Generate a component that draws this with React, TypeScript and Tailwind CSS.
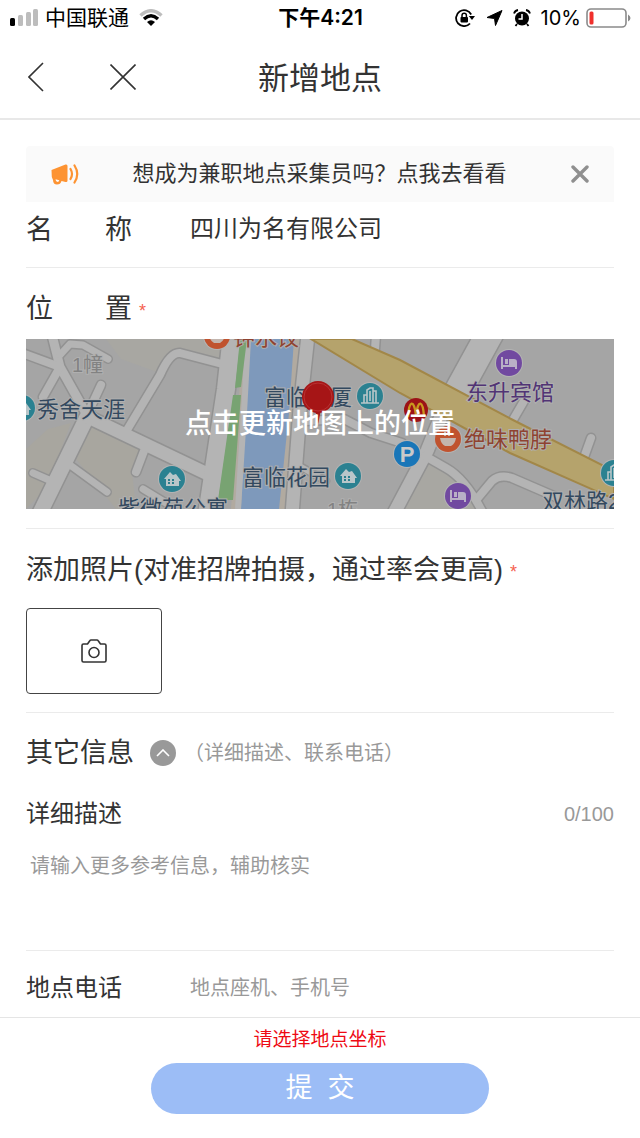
import type { ReactNode } from "react";

const LAND_LABEL = "#33495f";
const HOTEL_LABEL = "#513475";
const FOOD_LABEL = "#8f4330";

const ROADS = [
  { d: "M26 -4 L34 28 L61 76", w: 9 },
  { d: "M-4 14 L34 28 L17 58", w: 8 },
  { d: "M34 16 L44 5 L57 6 L82 20", w: 7 },
  { d: "M75 46 L62 74", w: 8 },
  { d: "M101 91 L134 36 Q144 13 154 14 L200 26", w: 8 },
  { d: "M44 126 L81 153", w: 7 },
  { d: "M7 134 L30 144", w: 7 },
  { d: "M118 112 L110 133", w: 8 },
  { d: "M117 150 L140 164", w: 7 },
  { d: "M62 76 L13 176", w: 15 },
  { d: "M62 78 L190 139", w: 13 },
  { d: "M206 -4 L200 50 L181 176", w: 18 },
  { d: "M280 82 L318 80 L345 94 L376 104", w: 8 },
  { d: "M268 124 L300 142", w: 6 },
  { d: "M282 -4 L274 70 L266 176", w: 13 },
  { d: "M414 80 L401 112 L366 178", w: 13 },
  { d: "M399 117 L420 129 Q440 140 458 176", w: 8 },
  { d: "M451 160 L466 142 Q474 135 486 139 L530 158", w: 8 },
  { d: "M464 -6 L430 56", w: 27 },
  { d: "M350 -4 L349 10", w: 8 },
  { d: "M498 62 L484 86", w: 8 },
  { d: "M565 99 L556 124", w: 8 },
];

function Poi({ x, y, color, children }: { x: number; y: number; color: string; children: ReactNode }) {
  return (
    <g transform={`translate(${x} ${y})`}>
      <circle r="14" fill="#b4b4b4" />
      <circle r="13" fill={color} />
      {children}
    </g>
  );
}

function House() {
  return (
    <g>
      <path d="M-8 0 L-2 -7 L1 -4 L4 -5 L9 2 H7 V7 H-6 V0 Z" fill="#b9c6c9" />
      <path d="M-4 0h2v2h-2z M0 0h2v2h-2z M-4 3h2v2h-2z M0 3h2v2h-2z" fill="#2b7f8d" />
    </g>
  );
}

function Tower() {
  return (
    <g fill="none" stroke="#b9c6c9" strokeWidth="1.6">
      <path d="M-3 7 V-6 L0 -8 H3 V7 M3 -5 H6 V7 M-6 7 V-1 H-3 M-9 7 H9" />
      <path d="M0 -5 V5" />
    </g>
  );
}

function Bed() {
  return (
    <g>
      <path d="M-7 -6 V6 M7 6 V2 M-7 3 H7" stroke="#b9b0c6" strokeWidth="2" />
      <path d="M-4 -4 h3 v5 h-3z M0 -4 H5 Q8 -4 8 -1 V2 H0 Z" fill="#b9b0c6" />
    </g>
  );
}

function Bowl() {
  return (
    <g>
      <path d="M-8 -1 H8 Q7 5 3 7 H-3 Q-7 5 -8 -1 Z" fill="#c3b5ae" />
      <path d="M-3 -7 V-3 M1 -7 V-3" stroke="#c3b5ae" strokeWidth="2" />
    </g>
  );
}

function MapLabel({ x, y, color, size = 22, children }: { x: number; y: number; color: string; size?: number; children: ReactNode }) {
  return (
    <text x={x} y={y} fill={color} fontSize={size} stroke="#b0b0b0" strokeWidth="2" paintOrder="stroke">
      {children}
    </text>
  );
}

function MapPreview() {
  return (
    <svg viewBox="0 0 588 170" preserveAspectRatio="xMidYMid slice" className="block h-full w-full" aria-hidden="true">
      <rect width="588" height="170" fill="#a5a5a5" />
      <path d="M80 0 H200 V22 L154 12 L134 34 L95 20 Z" fill="#a8a7a2" />
      <path d="M68 84 L118 108 L106 132 L110 170 H90 L50 120 Z M0 110 L22 90 L45 84 L20 150 L0 170 Z" fill="#a8a69f" />
      <path d="M400 118 L440 140 L460 170 H370 Z" fill="#a8a7a2" />
      <path d="M217 0 H276 L260 170 H205 Z" fill="#b1aaa0" />
      {ROADS.map((r) => (
        <path key={r.d} d={r.d} fill="none" stroke="#929292" strokeWidth={r.w + 3} strokeLinejoin="round" strokeLinecap="round" />
      ))}
      {ROADS.map((r) => (
        <path key={r.d} d={r.d} fill="none" stroke="#b4b4b4" strokeWidth={r.w} strokeLinejoin="round" strokeLinecap="round" />
      ))}
      <path d="M224 0 H268 L263 74 L253 170 H215 L219 74 Z" fill="#7e99bb" />
      <path d="M222 0 L218 74 L212 170" fill="none" stroke="#b4b4b4" strokeWidth="6" />
      <path d="M214 0 H221 L215 48 L209 49 Z M207 56 H215 L207 161 H192 Z" fill="#78a372" />
      <path d="M285 0 H326 L374 21 L487 81 L588 132 V160 L484 114 L374 54 Z" fill="#b5a36c" stroke="#a28748" strokeWidth="2" />

      <MapLabel x={46} y={33} color="#828282" size={20}>1幢</MapLabel>
      <MapLabel x={301} y={178} color="#828282" size={20}>1栋</MapLabel>
      <MapLabel x={11} y={78} color={LAND_LABEL}>秀舍天涯</MapLabel>
      <MapLabel x={92} y={177} color={LAND_LABEL}>紫微苑公寓</MapLabel>
      <MapLabel x={207} y={6} color={FOOD_LABEL}>钟水饺</MapLabel>
      <MapLabel x={238} y={66} color={LAND_LABEL}>富临大厦</MapLabel>
      <MapLabel x={216} y={146} color={LAND_LABEL}>富临花园</MapLabel>
      <MapLabel x={440} y={61} color={HOTEL_LABEL}>东升宾馆</MapLabel>
      <MapLabel x={438} y={108} color={FOOD_LABEL}>绝味鸭脖</MapLabel>
      <MapLabel x={516} y={170} color={LAND_LABEL}>双林路2</MapLabel>

      <Poi x={-4} y={69} color="#2b8191"><House /></Poi>
      <Poi x={146} y={140} color="#2b8191"><House /></Poi>
      <Poi x={322} y={137} color="#2b8191"><House /></Poi>
      <Poi x={344} y={57} color="#2b8191"><Tower /></Poi>
      <Poi x={588} y={134} color="#2b8191"><Tower /></Poi>
      <Poi x={483} y={24} color="#7149a0"><Bed /></Poi>
      <Poi x={432} y={157} color="#7149a0"><Bed /></Poi>
      <Poi x={191} y={-3} color="#c0532f"><Bowl /></Poi>
      <Poi x={422} y={100} color="#c0532f"><Bowl /></Poi>
      <Poi x={381} y={115} color="#1976b8">
        <text y="8" textAnchor="middle" fontSize="22" fontWeight="700" fill="#c9c9c9">P</text>
      </Poi>
      <g transform="translate(390 71)">
        <circle r="12" fill="#9c1217" />
        <path d="M-8 7 C-7 -10 -2 -11 0 5 C2 -11 7 -10 8 7" fill="none" stroke="#c9971f" strokeWidth="2.4" />
      </g>

      <path d="M289 70 L292 86 L295 70 Z" fill="#a31a1b" />
      <circle cx="292" cy="58" r="16" fill="#a61516" />
      <circle cx="292" cy="58" r="14" fill="none" stroke="#b83233" strokeWidth="1" />
    </svg>
  );
}

function StatusBar() {
  return (
    <div className="grid h-9 grid-cols-[1fr_auto_1fr] items-center pl-[10px] pr-[9px] text-[21px] leading-9 text-black">
      <div className="flex items-center">
        <svg width="29" height="18" viewBox="0 0 29 18" aria-hidden="true">
          <rect x="0" y="9" width="5" height="8" rx="1.5" fill="#000" />
          <rect x="8" y="6" width="5" height="11" rx="1.5" fill="#bdbdbd" />
          <rect x="16" y="3" width="5" height="14" rx="1.5" fill="#bdbdbd" />
          <rect x="23" y="0" width="5" height="17" rx="1.5" fill="#bdbdbd" />
        </svg>
        <span className="ml-[6px]">中国联通</span>
        <svg className="ml-[10px]" width="24" height="18" viewBox="0 0 24 18" fill="none" aria-label="Wi-Fi">
          <path d="M1.5 6.5 Q12 -3 22.5 6.5" stroke="#bdbdbd" strokeWidth="3.4" />
          <path d="M5 10 Q12 3.6 19 10" stroke="#000" strokeWidth="3.4" />
          <path d="M8 13 Q12 9.5 16 13 L12 17 Z" fill="#000" />
        </svg>
      </div>
      <span className="font-semibold">下午4:21</span>
      <div className="flex items-center justify-end">
        <svg width="20" height="18" viewBox="0 0 20 18" fill="none" aria-hidden="true">
          <path d="M16.2 5.5 A8 8 0 1 0 15 14.5" stroke="#000" strokeWidth="1.8" />
          <path d="M13.8 7 H20 L17 11 Z" fill="#000" />
          <rect x="5.5" y="8" width="7.5" height="5.4" rx="0.8" fill="#000" />
          <path d="M7 8 V6.4 a2.2 2.2 0 0 1 4.4 0 V8" stroke="#000" strokeWidth="1.5" />
        </svg>
        <svg className="ml-[11px]" width="17" height="16" viewBox="0 0 17 16" aria-hidden="true">
          <path d="M16 0.5 L9.5 15.5 L8.5 8.5 L1 7.5 Z" fill="#000" stroke="#000" strokeLinejoin="round" />
        </svg>
        <svg className="ml-[10px]" width="18" height="18" viewBox="0 0 18 18" fill="none" aria-hidden="true">
          <circle cx="9" cy="9.5" r="7" fill="#000" />
          <path d="M9 5 V10 H5.5" stroke="#fff" strokeWidth="1.5" />
          <path d="M1 4.5 Q2 1.5 5 1 M17 4.5 Q16 1.5 13 1" stroke="#000" strokeWidth="1.8" />
          <path d="M4 15 L2.5 17 M14 15 L15.5 17" stroke="#000" strokeWidth="1.8" />
        </svg>
        <span className="ml-[10px] font-['Inter',sans-serif] text-[20px]">10%</span>
        <svg className="ml-[5px]" width="45" height="20" viewBox="0 0 45 20" aria-hidden="true">
          <rect x="1" y="1" width="39" height="18" rx="4" fill="#fff" stroke="#8a8a8a" strokeWidth="1.6" />
          <rect x="3.5" y="3.5" width="4" height="13" rx="1.5" fill="#f0302c" />
          <path d="M42 6.5 Q44.5 8 44.5 10 Q44.5 12 42 13.5 Z" fill="#8a8a8a" />
        </svg>
      </div>
    </div>
  );
}

function Required() {
  return <span className="ml-[7px] pt-1 text-[18px] leading-none text-[#f5614f]">*</span>;
}

export default function App() {
  return (
    <div className="flex min-h-screen flex-col bg-white font-['Liberation_Sans','Noto_Sans_CJK_SC',sans-serif] text-[#333]">
      <div className="font-['Inter','Noto_Sans_CJK_SC',sans-serif]">
        <StatusBar />
      </div>

      <header className="grid h-[84px] grid-cols-[1fr_auto_1fr] items-center border-b-2 border-[#e8e8e8] px-7">
        <div className="flex items-center gap-[66px]">
          <button type="button" aria-label="返回">
            <svg width="16" height="30" viewBox="0 0 16 30" fill="none" stroke="#333" strokeWidth="1.6">
              <path d="M15 1 L1 15 L15 29" />
            </svg>
          </button>
          <button type="button" aria-label="关闭">
            <svg width="26" height="26" viewBox="0 0 26 26" fill="none" stroke="#333" strokeWidth="1.6">
              <path d="M0.5 0.5 L25.5 25.5 M25.5 0.5 L0.5 25.5" />
            </svg>
          </button>
        </div>
        <h1 className="pt-1 text-[31px] leading-10">新增地点</h1>
        <span />
      </header>

      <main className="flex-1 px-[26px] pt-[26px]">
        <div className="flex h-14 items-center rounded-t bg-[#fafafa] px-6">
          <svg width="30" height="24" viewBox="0 0 30 24" fill="none" aria-hidden="true">
            <path d="M1.5 8 L15.5 2.5 Q17.5 2 17.5 4 V18.5 Q17.5 20.5 15.5 20 L11.5 19 Q10.5 22.5 7 22.5 Q3.2 22.5 3 18 L1.8 15 Z" fill="#fd9332" />
            <path d="M5.5 17.3 Q5.8 20 7.5 20 Q9 19.8 9.3 18.3 Z" fill="#fafafa" />
            <path d="M20.5 7 Q23.5 12 20.5 17 M24.5 3.5 Q30 12 24.5 20.5" stroke="#fd9332" strokeWidth="2.2" strokeLinecap="round" />
          </svg>
          <a href="#collector" className="flex-1 pr-3 text-center text-[22px] leading-8">想成为兼职地点采集员吗？点我去看看</a>
          <button type="button" aria-label="关闭提示" className="mr-px">
            <svg width="18" height="18" viewBox="0 0 18 18" stroke="#8f8f8f" strokeWidth="3.4" strokeLinecap="round">
              <path d="M2 2 L16 16 M16 2 L2 16" />
            </svg>
          </button>
        </div>

        <div className="flex h-[66px] items-start border-b border-[#ebebeb]">
          <label htmlFor="name" className="flex h-14 w-[106px] items-center justify-between text-[27px]">
            <span>名</span>
            <span>称</span>
          </label>
          <input id="name" defaultValue="四川为名有限公司" className="ml-[58px] h-12 min-w-0 flex-1 bg-transparent text-[24px] outline-none" />
        </div>

        <section className="border-b border-[#ebebeb] pt-5 pb-[19px]">
          <h2 className="flex h-[42px] items-center text-[27px]">
            <span className="flex w-[106px] justify-between">
              <span>位</span>
              <span>置</span>
            </span>
            <Required />
          </h2>
          <button type="button" className="relative mt-[9px] block h-[170px] w-full overflow-hidden">
            <MapPreview />
            <span className="absolute inset-0 flex items-center justify-center text-[27px] font-medium text-white">
              点击更新地图上的位置
            </span>
          </button>
        </section>

        <section className="border-b border-[#ebebeb] pt-5 pb-[18px]">
          <h2 className="flex h-[42px] items-center text-[27px] whitespace-nowrap">
            添加照片(对准招牌拍摄，通过率会更高)
            <Required />
          </h2>
          <button type="button" aria-label="添加照片" className="mt-[17px] flex h-[86px] w-[136px] items-center justify-center rounded border border-[#444]">
            <svg width="26" height="24" viewBox="0 0 26 24" fill="none" stroke="#333" strokeWidth="1.6" strokeLinejoin="round">
              <path d="M2.5 5 H6.5 L9 1.5 Q9.3 1 10 1 H16 Q16.7 1 17 1.5 L19.5 5 H23.5 Q25 5 25 6.5 V21.5 Q25 23 23.5 23 H2.5 Q1 23 1 21.5 V6.5 Q1 5 2.5 5 Z" />
              <circle cx="13" cy="13.5" r="5" />
            </svg>
          </button>
        </section>

        <section className="border-b border-[#ebebeb] pt-5">
          <div className="flex h-10 items-center">
            <h2 className="text-[27px]">其它信息</h2>
            <button type="button" aria-label="收起" className="ml-4 flex size-[26px] items-center justify-center rounded-full bg-[#999]">
              <svg width="14" height="8" viewBox="0 0 14 8" fill="none" stroke="#fff" strokeWidth="1.6">
                <path d="M1 7 L7 1 L13 7" />
              </svg>
            </button>
            <span className="ml-2 text-[20px] text-[#999]">（详细描述、联系电话）</span>
          </div>
          <div className="mt-[23px] flex h-9 items-center justify-between">
            <label htmlFor="detail" className="text-[24px]">详细描述</label>
            <span className="text-[20px] text-[#999]">0/100</span>
          </div>
          <textarea
            id="detail"
            maxLength={100}
            placeholder="请输入更多参考信息，辅助核实"
            className="mt-5 block h-[98px] w-full resize-none px-1 text-[20px] leading-7 outline-none placeholder:text-[#999]"
          />
        </section>

        <div className="flex h-[65px] items-center pt-2">
          <label htmlFor="phone" className="w-[106px] text-[24px]">地点电话</label>
          <input
            id="phone"
            type="tel"
            placeholder="地点座机、手机号"
            className="ml-[58px] min-w-0 flex-1 text-[20px] outline-none placeholder:text-[#999]"
          />
        </div>
      </main>

      <footer className="flex flex-col items-center border-t border-[#e5e5e5] pb-6">
        <p className="pt-px text-[19px] leading-[42px] text-[#ee0a14]">请选择地点坐标</p>
        <button type="submit" className="mt-[2px] h-[51px] w-[338px] rounded-full bg-[#9cbdf6] text-[27px] leading-[51px] text-white">
          提&nbsp;&nbsp;交
        </button>
      </footer>
    </div>
  );
}
